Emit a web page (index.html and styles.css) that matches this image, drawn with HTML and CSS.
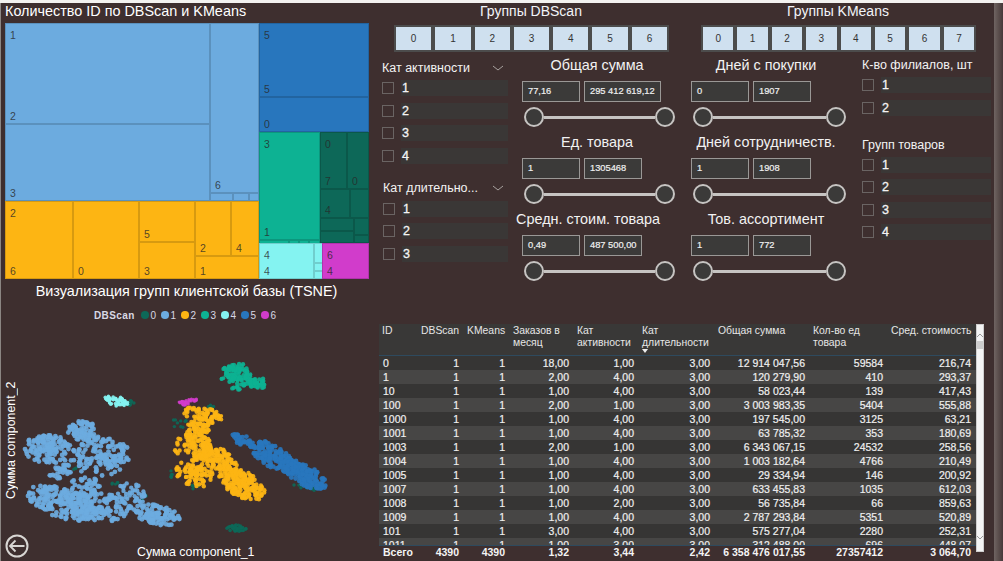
FILE: index.html
```html
<!DOCTYPE html>
<html lang="ru">
<head>
    <meta charset="UTF-8">
    <title>Группы клиентской базы</title>
    <link rel="stylesheet" href="styles.css">
</head>
<body>
<div class="page">
    <div class="left-col">
        <h2 class="tree-title">Количество ID по DBScan и KMeans</h2>
        <div class="treemap">
            <div class="tm-left">
                <div class="tm-group c1 h-lb">
                    <div class="tm-col w-lb1">
                        <div class="tm-cell h-a"><span>1</span><span>2</span></div>
                        <div class="tm-cell grow"><span></span><span>3</span></div>
                    </div>
                    <div class="tm-col grow">
                        <div class="tm-cell grow"><span></span><span>6</span></div>
                        <div class="tm-row h-8">
                            <div class="tm-cell w-26"></div>
                            <div class="tm-cell w-18"></div>
                            <div class="tm-cell grow"></div>
                        </div>
                    </div>
                </div>
                <div class="tm-group c2 grow">
                    <div class="tm-cell w-68"><span>2</span><span>6</span></div>
                    <div class="tm-cell w-66"><span></span><span>0</span></div>
                    <div class="tm-col w-56">
                        <div class="tm-cell h-41 end"><span>5</span></div>
                        <div class="tm-cell grow end"><span>3</span></div>
                    </div>
                    <div class="tm-col grow">
                        <div class="tm-row h-55">
                            <div class="tm-cell w-36 end"><span>2</span></div>
                            <div class="tm-cell grow end"><span>4</span></div>
                        </div>
                        <div class="tm-cell grow end"><span>1</span></div>
                    </div>
                </div>
            </div>
            <div class="tm-right">
                <div class="tm-col c5 h-109">
                    <div class="tm-cell h-74"><span>5</span><span>5</span></div>
                    <div class="tm-cell grow end"><span>0</span></div>
                </div>
                <div class="tm-row h-111">
                    <div class="tm-col c3 w-61">
                        <div class="tm-cell grow"><span>3</span><span>1</span></div>
                        <div class="tm-row h-3">
                            <div class="tm-cell w-30"></div>
                            <div class="tm-cell w-10"></div>
                            <div class="tm-cell w-10"></div>
                            <div class="tm-cell grow"></div>
                        </div>
                    </div>
                    <div class="tm-col c0 grow">
                        <div class="tm-row h-57">
                            <div class="tm-cell w-27"><span>0</span><span>7</span></div>
                            <div class="tm-cell grow end"><span>0</span></div>
                        </div>
                        <div class="tm-row h-29">
                            <div class="tm-cell w-30 end"><span>4</span></div>
                            <div class="tm-cell grow"></div>
                        </div>
                        <div class="tm-row grow">
                            <div class="tm-col w-34">
                                <div class="tm-cell h-13"></div>
                                <div class="tm-cell grow"></div>
                            </div>
                            <div class="tm-col grow">
                                <div class="tm-cell h-20"></div>
                                <div class="tm-cell grow"></div>
                            </div>
                        </div>
                    </div>
                </div>
                <div class="tm-row grow">
                    <div class="tm-row c4 w-63">
                        <div class="tm-cell w-55"><span>4</span><span>4</span></div>
                        <div class="tm-col grow">
                            <div class="tm-cell h-23"></div>
                            <div class="tm-cell h-6"></div>
                            <div class="tm-cell grow"></div>
                        </div>
                    </div>
                    <div class="tm-cell c6 grow"><span>6</span><span>4</span></div>
                </div>
            </div>
        </div>
        <h2 class="scatter-title">Визуализация групп клиентской базы (TSNE)</h2>
        <div class="legend">
            <b>DBScan</b>
            <span><i class="dot c0"></i>0</span>
            <span><i class="dot c1"></i>1</span>
            <span><i class="dot c2"></i>2</span>
            <span><i class="dot c3"></i>3</span>
            <span><i class="dot c4"></i>4</span>
            <span><i class="dot c5"></i>5</span>
            <span><i class="dot c6"></i>6</span>
        </div>
        <div class="scatter">
            <svg id="points" width="372" height="236" viewBox="0 322 372 236"></svg>
            <div class="axis-y">Сумма component_2</div>
            <div class="axis-x">Сумма component_1</div>
            <svg class="back" width="24" height="24" viewBox="0 0 24 24">
                <circle cx="12" cy="12" r="10.5" fill="none" stroke="#d8d6d3" stroke-width="2"/>
                <path d="M19.5 12H5M10.5 6.5L5 12l5.5 5.5" fill="none" stroke="#d8d6d3" stroke-width="1.8"/>
            </svg>
        </div>
    </div>

    <div class="right-col">
        <div class="filters">
            <div class="filter-a">
                <h2 class="group-title">Группы DBScan</h2>
                <div class="chips">
                    <div class="chip">0</div><div class="chip">1</div><div class="chip">2</div><div class="chip">3</div><div class="chip">4</div><div class="chip">5</div><div class="chip">6</div>
                </div>
                <div class="filter-body">
                    <div class="checks-col">
                        <div class="slicer">
                            <div class="slicer-head">Кат активности<svg class="chev" width="12" height="6" viewBox="0 0 12 6"><path d="M1 1l5 4 5-4" fill="none" stroke="#a8a29f"/></svg></div>
                            <div class="check-row"><i></i><span>1</span></div>
                            <div class="check-row"><i></i><span>2</span></div>
                            <div class="check-row"><i></i><span>3</span></div>
                            <div class="check-row"><i></i><span>4</span></div>
                        </div>
                        <div class="slicer second">
                            <div class="slicer-head">Кат длительно...<svg class="chev" width="12" height="6" viewBox="0 0 12 6"><path d="M1 1l5 4 5-4" fill="none" stroke="#a8a29f"/></svg></div>
                            <div class="check-row"><i></i><span>1</span></div>
                            <div class="check-row"><i></i><span>2</span></div>
                            <div class="check-row"><i></i><span>3</span></div>
                        </div>
                    </div>
                    <div class="ranges">
                        <div class="range">
                            <div class="range-title">Общая сумма</div>
                            <div class="range-boxes"><div class="box w58">77,16</div><div class="box w76">295 412 619,12</div></div>
                            <div class="slider"><i></i><b></b><i></i></div>
                        </div>
                        <div class="range">
                            <div class="range-title">Ед. товара</div>
                            <div class="range-boxes"><div class="box w58">1</div><div class="box w58">1305468</div></div>
                            <div class="slider"><i></i><b></b><i></i></div>
                        </div>
                        <div class="range">
                            <div class="range-title wide">Средн. стоим. товара</div>
                            <div class="range-boxes"><div class="box w58">0,49</div><div class="box w58">487 500,00</div></div>
                            <div class="slider"><i></i><b></b><i></i></div>
                        </div>
                    </div>
                </div>
            </div>
            <div class="filter-b">
                <h2 class="group-title">Группы KMeans</h2>
                <div class="chips">
                    <div class="chip">0</div><div class="chip">1</div><div class="chip">2</div><div class="chip">3</div><div class="chip">4</div><div class="chip">5</div><div class="chip">6</div><div class="chip">7</div>
                </div>
                <div class="filter-body">
                    <div class="ranges">
                        <div class="range">
                            <div class="range-title">Дней с покупки</div>
                            <div class="range-boxes"><div class="box w58">0</div><div class="box w58">1907</div></div>
                            <div class="slider"><i></i><b></b><i></i></div>
                        </div>
                        <div class="range">
                            <div class="range-title">Дней сотрудничеств.</div>
                            <div class="range-boxes"><div class="box w58">1</div><div class="box w58">1908</div></div>
                            <div class="slider"><i></i><b></b><i></i></div>
                        </div>
                        <div class="range">
                            <div class="range-title">Тов. ассортимент</div>
                            <div class="range-boxes"><div class="box w58">1</div><div class="box w58">772</div></div>
                            <div class="slider"><i></i><b></b><i></i></div>
                        </div>
                    </div>
                    <div class="checks-col narrow">
                        <div class="slicer">
                            <div class="slicer-head">К-во филиалов, шт</div>
                            <div class="check-row"><i></i><span>1</span></div>
                            <div class="check-row"><i></i><span>2</span></div>
                        </div>
                        <div class="slicer third">
                            <div class="slicer-head">Групп товаров</div>
                            <div class="check-row"><i></i><span>1</span></div>
                            <div class="check-row"><i></i><span>2</span></div>
                            <div class="check-row"><i></i><span>3</span></div>
                            <div class="check-row"><i></i><span>4</span></div>
                        </div>
                    </div>
                </div>
            </div>
        </div>

        <div class="table-wrap">
            <table>
                <thead>
                    <tr>
                        <th class="c-id">ID</th><th class="c-db">DBScan</th><th class="c-km">KMeans</th><th class="c-ord">Заказов в месяц</th><th class="c-act">Кат активности</th><th class="c-len">Кат длительности<span class="sort"></span></th><th class="c-sum">Общая сумма</th><th class="c-qty">Кол-во ед товара</th><th class="c-avg">Сред. стоимость</th>
                    </tr>
                </thead>
                <tbody>
                    <tr><td>0</td><td>1</td><td>1</td><td>18,00</td><td>1,00</td><td>3,00</td><td>12 914 047,56</td><td>59584</td><td>216,74</td></tr>
                    <tr><td>1</td><td>1</td><td>1</td><td>2,00</td><td>4,00</td><td>3,00</td><td>120 279,90</td><td>410</td><td>293,37</td></tr>
                    <tr><td>10</td><td>1</td><td>1</td><td>1,00</td><td>4,00</td><td>3,00</td><td>58 023,44</td><td>139</td><td>417,43</td></tr>
                    <tr><td>100</td><td>1</td><td>1</td><td>2,00</td><td>1,00</td><td>3,00</td><td>3 003 983,35</td><td>5404</td><td>555,88</td></tr>
                    <tr><td>1000</td><td>1</td><td>1</td><td>1,00</td><td>4,00</td><td>3,00</td><td>197 545,00</td><td>3125</td><td>63,21</td></tr>
                    <tr><td>1001</td><td>1</td><td>1</td><td>1,00</td><td>4,00</td><td>3,00</td><td>63 785,32</td><td>353</td><td>180,69</td></tr>
                    <tr><td>1003</td><td>1</td><td>1</td><td>2,00</td><td>1,00</td><td>3,00</td><td>6 343 067,15</td><td>24532</td><td>258,56</td></tr>
                    <tr><td>1004</td><td>1</td><td>1</td><td>1,00</td><td>4,00</td><td>3,00</td><td>1 003 182,64</td><td>4766</td><td>210,49</td></tr>
                    <tr><td>1005</td><td>1</td><td>1</td><td>1,00</td><td>4,00</td><td>3,00</td><td>29 334,94</td><td>146</td><td>200,92</td></tr>
                    <tr><td>1007</td><td>1</td><td>1</td><td>1,00</td><td>4,00</td><td>3,00</td><td>633 455,83</td><td>1035</td><td>612,03</td></tr>
                    <tr><td>1008</td><td>1</td><td>1</td><td>1,00</td><td>2,00</td><td>3,00</td><td>56 735,84</td><td>66</td><td>859,63</td></tr>
                    <tr><td>1009</td><td>1</td><td>1</td><td>1,00</td><td>4,00</td><td>3,00</td><td>2 787 293,84</td><td>5351</td><td>520,89</td></tr>
                    <tr><td>101</td><td>1</td><td>1</td><td>3,00</td><td>4,00</td><td>3,00</td><td>575 277,04</td><td>2280</td><td>252,31</td></tr>
                    <tr class="clipped"><td><div>1011</div></td><td><div>1</div></td><td><div>1</div></td><td><div>1,00</div></td><td><div>3,00</div></td><td><div>3,00</div></td><td><div>312 488,00</div></td><td><div>696</div></td><td><div>448,07</div></td></tr>
                </tbody>
                <tfoot>
                    <tr><td>Всего</td><td>4390</td><td>4390</td><td>1,32</td><td>3,44</td><td>2,42</td><td>6 358 476 017,55</td><td>27357412</td><td>3 064,70</td></tr>
                </tfoot>
            </table>
            <div class="scrollbar">
                <svg width="8" height="6" viewBox="0 0 8 6"><path d="M1 5l3-3 3 3" fill="none" stroke="#9a9a9a"/></svg>
                <div class="thumb"></div>
                <svg class="down" width="8" height="6" viewBox="0 0 8 6"><path d="M1 1l3 3 3-3" fill="none" stroke="#9a9a9a"/></svg>
            </div>
        </div>
    </div>
    <div class="page-edge"></div>
</div>
<script src="scatter.js"></script>
</body>
</html>
```

FILE: styles.css
```css
* {
    box-sizing: border-box;
}

html, body {
    margin: 0;
    height: 100%;
    overflow: hidden;
}

body {
    font-family: "Liberation Sans", Arial, sans-serif;
    background: #f3f2f0;
    color: #fff;
    padding-top: 3px;
}

h2 {
    margin: 0;
    font-weight: 400;
}

.page {
    height: 558px;
    display: flex;
    background: #3e2f2f;
    border-left: 1px solid #8b8683;
}

/* left column */
.left-col {
    width: 374px;
    flex: none;
    padding-left: 4px;
}

.tree-title {
    font-size: 14.4px;
    line-height: 16px;
    margin-bottom: 4px;
}

.treemap {
    width: 364px;
    height: 256px;
    display: flex;
}

.tm-left {
    width: 254px;
    display: flex;
    flex-direction: column;
}

.tm-right {
    width: 110px;
    display: flex;
    flex-direction: column;
}

.tm-group, .tm-row {
    display: flex;
    min-height: 0;
}

.tm-col {
    display: flex;
    flex-direction: column;
    min-width: 0;
    min-height: 0;
}

.tm-cell {
    border: 1px solid rgba(0, 0, 0, 0.15);
    color: rgba(40, 40, 40, 0.8);
    font-size: 10.5px;
    line-height: 12px;
    padding: 5px 4px 1px;
    display: flex;
    flex-direction: column;
    justify-content: space-between;
    overflow: hidden;
    min-height: 0;
}

.tm-cell.end {
    justify-content: flex-end;
}

.grow { flex: 1; }

.h-lb { height: 178px; }
.w-lb1 { width: 205px; }
.h-a { height: 101px; }
.h-8 { height: 8px; }
.w-26 { width: 26px; }
.w-18 { width: 18px; }
.w-68 { width: 68px; }
.w-66 { width: 66px; }
.w-56 { width: 56px; }
.h-41 { height: 41px; }
.h-55 { height: 55px; }
.w-36 { width: 36px; }
.h-109 { height: 109px; }
.h-74 { height: 74px; }
.h-111 { height: 111px; }
.w-61 { width: 61px; }
.h-3 { height: 3px; }
.w-30 { width: 30px; }
.w-10 { width: 10px; }
.h-57 { height: 57px; }
.w-27 { width: 27px; }
.h-29 { height: 29px; }
.w-34 { width: 34px; }
.h-13 { height: 13px; }
.h-20 { height: 20px; }
.w-63 { width: 63px; }
.w-55 { width: 55px; }
.h-23 { height: 23px; }
.h-6 { height: 6px; }

.c0 { background: #0d6858; }
.c1 { background: #6cabdf; }
.c2 { background: #fdb513; }
.c3 { background: #0db293; }
.c4 { background: #84f3f1; }
.c5 { background: #2876bd; }
.c6 { background: #d13ccb; }

.scatter-title {
    font-size: 14.4px;
    line-height: 20px;
    margin-top: 2px;
    width: 363px;
    text-align: center;
}

.legend {
    display: flex;
    align-items: center;
    height: 14px;
    margin-top: 7px;
    padding-left: 89px;
    font-size: 10px;
    color: #d8d8e4;
}

.legend b {
    width: 47px;
    letter-spacing: 0.4px;
}

.legend span {
    width: 20px;
    display: flex;
    align-items: center;
}

.dot {
    width: 7.5px;
    height: 7.5px;
    border-radius: 50%;
    margin-right: 2px;
}

.scatter {
    position: relative;
    height: 236px;
}

#points {
    position: absolute;
    left: -5px;
    top: 0;
}

.axis-y {
    position: absolute;
    left: -2px;
    top: 35px;
    width: 16px;
    height: 166px;
    writing-mode: vertical-rl;
    transform: rotate(180deg);
    font-size: 12.4px;
    line-height: 16px;
    text-align: center;
}

.axis-x {
    position: absolute;
    left: 132px;
    top: 222px;
    font-size: 12.4px;
    line-height: 16px;
}

.back {
    position: absolute;
    left: 0;
    top: 212px;
}

/* right column */
.right-col {
    width: 619px;
    flex: none;
}

.filters {
    display: flex;
    height: 318px;
}

.filter-a {
    width: 307px;
    flex: none;
}

.filter-b {
    flex: 1;
}

.group-title {
    font-size: 14px;
    line-height: 16px;
    text-align: center;
    color: #f2f4f8;
    width: 312px;
}

.chips {
    display: flex;
    margin-top: 6px;
    height: 27px;
    padding-left: 19px;
}

.chip {
    height: 27px;
    border: 2px solid #4c4c4c;
    background: #cfe0ef;
    color: #333;
    font-size: 10px;
    line-height: 23px;
    text-align: center;
}

.filter-a .chip { width: 39.3px; }
.filter-b .chip { width: 34.4px; }

.filter-body {
    display: flex;
}

.filter-a .filter-body {
    padding-left: 1px;
}

.checks-col {
    width: 133px;
    flex: none;
    padding-left: 6px;
}

.checks-col.narrow {
    width: 138px;
    padding-left: 9px;
}

.slicer-head {
    font-size: 12.5px;
    line-height: 16px;
    height: 16px;
    margin-top: 8px;
    margin-bottom: 4px;
    display: flex;
    justify-content: space-between;
    align-items: center;
    color: #f3f3f3;
    padding-right: 5px;
    white-space: nowrap;
}

.slicer.second {
    padding-left: 1px;
}

.slicer.second .slicer-head {
    margin-top: 16px;
    margin-bottom: 5px;
}

.slicer.third .slicer-head {
    margin-top: 21px;
}

.narrow .slicer-head {
    margin-top: 5px;
}

.check-row {
    display: flex;
    align-items: center;
    height: 16px;
    margin-bottom: 6.5px;
    gap: 7px;
}

.check-row i {
    width: 12px;
    height: 12px;
    border: 1px solid #6a6463;
    flex: none;
}

.check-row span {
    flex: 1;
    background: #3a3736;
    font-size: 12.5px;
    line-height: 16px;
    height: 16px;
    padding-left: 1px;
    -webkit-text-stroke: 0.3px #f4f4f4;
    color: #f4f4f4;
    margin-right: 1px;
}

.narrow .check-row span {
    margin-right: 0;
}

.ranges {
    width: 173px;
    flex: none;
    padding: 4px 0 0 13px;
}

.filter-b .ranges {
    width: 171px;
    padding-left: 9px;
}

.range {
    height: 77px;
}

.range-title {
    font-size: 14.4px;
    line-height: 18px;
    text-align: center;
    color: #f2f2f2;
    white-space: nowrap;
    width: 150px;
}

.range-title.wide {
    margin-left: -7px;
    width: 146px;
}

.range-boxes {
    display: flex;
    gap: 4px;
    margin-top: 7px;
}

.box {
    height: 21px;
    background: #3b3a39;
    border: 1px solid #9a9896;
    font-size: 9.3px;
    line-height: 19px;
    padding-left: 5px;
    white-space: nowrap;
    color: #f0f0f0;
    -webkit-text-stroke: 0.2px #f0f0f0;
}

.w58 { width: 58px; }
.w76 { width: 77px; }

.slider {
    display: flex;
    align-items: center;
    width: 151px;
    margin: 5px 0 0 2px;
}

.filter-b .slider {
    width: 153px;
}

.slider i {
    width: 20px;
    height: 20px;
    border-radius: 50%;
    background: #3b3a39;
    border: 2px solid #c6c4c2;
    flex: none;
}

.slider b {
    flex: 1;
    height: 3px;
    background: #c6c4c2;
}

/* table */
.table-wrap {
    display: flex;
    align-items: flex-start;
    height: 234px;
    margin: 3px 0 0 4px;
}

table {
    width: 597px;
    flex: none;
    border-collapse: collapse;
    table-layout: fixed;
}

th {
    height: 31px;
    padding: 1px 0 0 3px;
    background: #393837;
    color: #e6e6e6;
    font-weight: 400;
    font-size: 10.4px;
    line-height: 12px;
    text-align: left;
    vertical-align: top;
    border-bottom: 1px solid #2e4a5e;
    position: relative;
}

.c-id { width: 39px; }
.c-db { width: 46px; }
.c-km { width: 46px; }
.c-ord { width: 64px; }
.c-act { width: 65px; }
.c-len { width: 76px; }
.c-sum { width: 95px; }
.c-qty { width: 78px; }
.c-avg { width: 88px; }

.sort {
    position: absolute;
    left: 3px;
    top: 25px;
    border: 3px solid transparent;
    border-top: 4px solid #eee;
    border-bottom: 0;
}

td {
    height: 14px;
    padding: 0 5px 0 0;
    text-align: right;
    line-height: 14px;
    font-size: 10.5px;
    color: #efefef;
    white-space: nowrap;
    overflow: hidden;
    -webkit-text-stroke: 0.2px #efefef;
}

td:first-child {
    text-align: left;
    padding-left: 4px;
}

tbody tr:nth-child(odd) {
    background: #363534;
}

tbody tr:nth-child(even) {
    background: #474645;
}

tr.clipped td {
    height: 7px;
    line-height: 14px;
}

tr.clipped div {
    height: 7px;
    overflow: hidden;
}

tfoot td {
    height: 13px;
    line-height: 13px;
    border-top: 1px solid #2e4a5e;
    font-weight: 700;
    background: #3e2f2f;
    color: #f4f4f4;
    -webkit-text-stroke: 0;
}

.scrollbar {
    width: 8px;
    height: 228px;
    background: #f4f4f4;
    border: 1px solid #cfcfcf;
    position: relative;
    padding-top: 7px;
    font-size: 0;
}

.scrollbar svg {
    margin-left: -1px;
}

.thumb {
    height: 8px;
    margin-top: 3px;
    background: #cdcdcd;
}

.scrollbar .down {
    position: absolute;
    bottom: 10px;
    left: -1px;
    margin-left: 0;
}

.page-edge {
    width: 9px;
    flex: none;
    background: linear-gradient(90deg, #6f6462, #5a4e4c 50%, #46383a);
}
```

FILE: scatter.js
```js
// points of the TSNE chart, fixed seed so the picture stays the same
var seed = 7;
function rnd() {
    seed = (seed * 16807) % 2147483647;
    return seed / 2147483647;
}

var colors = {
    0: "#0d6858", 1: "#6cabdf", 2: "#fdb513", 3: "#0db293",
    4: "#84f3f1", 5: "#2876bd", 6: "#d13ccb"
};

// group, cx, cy, rx, ry, tilt (deg), count, dot radius
var blobs = [
    [0, 131, 403, 3, 3, 0, 8, 1.7],
    [0, 178, 424, 10, 7, 0, 10, 1.7],
    [0, 211, 407, 4, 2, 0, 6, 1.7],
    [0, 172, 475, 2, 5, 0, 6, 1.7],
    [0, 195, 487, 6, 3, 0, 5, 1.7],
    [0, 305, 487, 14, 3, 10, 10, 1.7],
    [0, 120, 445, 3, 3, 0, 3, 1.7],
    [0, 112, 484, 8, 2, 0, 5, 1.7],
    [0, 145, 497, 4, 4, 0, 5, 1.7],
    [0, 72, 468, 4, 3, 0, 4, 1.7],
    [0, 235, 529, 11, 2.5, 0, 25, 1.8],
    [0, 235, 527, 8, 2, 0, 15, 1.8],
    [1, 47, 449, 24, 14, 0, 130, 2.4],
    [1, 83, 432, 16, 11, 0, 70, 2.4],
    [1, 100, 456, 30, 20, 0, 150, 2.4],
    [1, 60, 470, 12, 11, 0, 30, 2.4],
    [1, 62, 503, 36, 15, 18, 210, 2.4],
    [1, 100, 506, 32, 15, 8, 130, 2.4],
    [1, 85, 487, 16, 11, 0, 35, 2.4],
    [1, 130, 495, 16, 12, 0, 40, 2.2],
    [1, 157, 515, 24, 10, 12, 110, 2.4],
    [2, 202, 416, 18, 10, 15, 60, 2.2],
    [2, 218, 417, 4, 6, -30, 12, 2],
    [2, 197, 440, 13, 22, 0, 130, 2.2],
    [2, 178, 445, 4, 9, 0, 8, 2.2],
    [2, 210, 453, 11, 11, 0, 40, 2.2],
    [2, 219, 460, 14, 12, 30, 70, 2.2],
    [2, 194, 474, 20, 12, 15, 90, 2.2],
    [2, 242, 484, 25, 13, 28, 190, 2.2],
    [2, 228, 468, 10, 9, 0, 30, 2.2],
    [5, 244, 441, 13, 5, 25, 35, 2.4],
    [5, 272, 456, 24, 11, 32, 130, 2.4],
    [5, 305, 475, 24, 10, 30, 150, 2.4],
    [3, 236, 371, 13, 8, 0, 70, 2.2],
    [3, 254, 381, 12, 7, 20, 50, 2.2],
    [3, 237, 383, 8, 7, 0, 25, 2.2],
    [3, 222, 379, 2, 1, 0, 3, 2],
    [4, 116, 401, 12, 5, 12, 60, 1.8],
    [6, 187, 402, 10, 3, -14, 30, 1.7]
];

var out = "";
blobs.forEach(function (b) {
    var t = b[5] * Math.PI / 180;
    for (var i = 0; i < b[6]; i++) {
        var a = rnd() * Math.PI * 2;
        var r = Math.pow(rnd(), 0.6);
        var dx = Math.cos(a) * r * b[3];
        var dy = Math.sin(a) * r * b[4];
        var x = b[1] + dx * Math.cos(t) - dy * Math.sin(t);
        var y = b[2] + dx * Math.sin(t) + dy * Math.cos(t);
        out += '<circle cx="' + x.toFixed(1) + '" cy="' + y.toFixed(1) + '" r="' + b[7] + '" fill="' + colors[b[0]] + '" fill-opacity="0.92"/>';
    }
});
document.getElementById("points").innerHTML = out;
```
